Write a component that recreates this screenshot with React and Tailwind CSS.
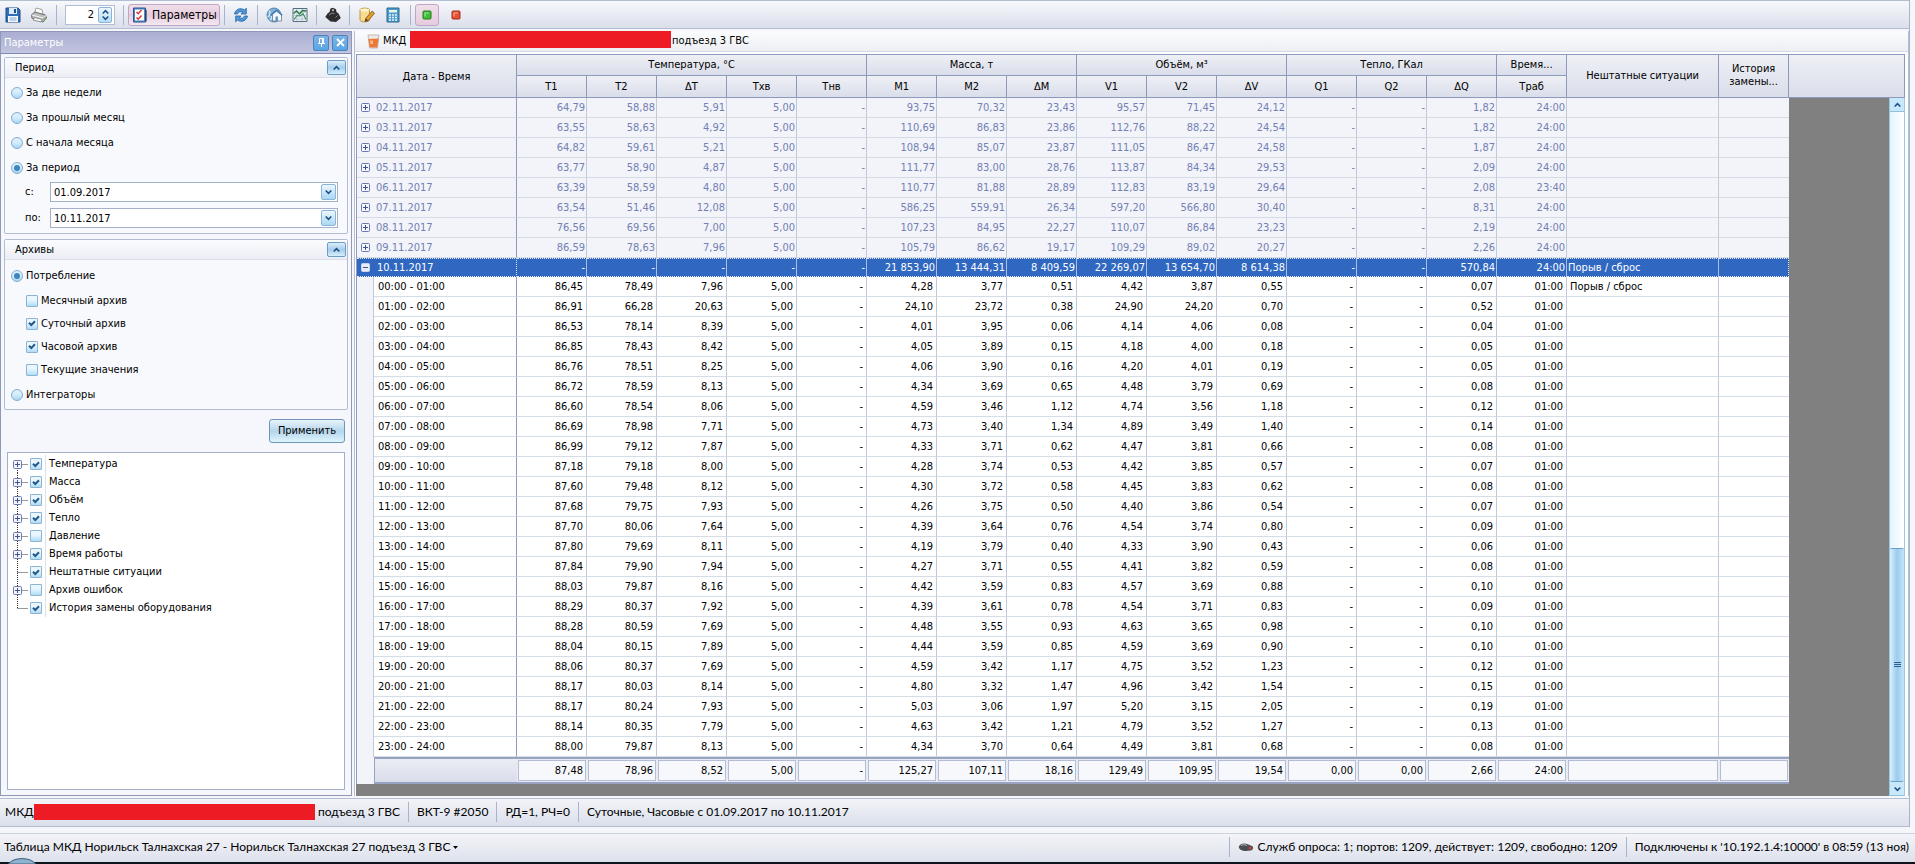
import { useState } from "react";

const DAYS = [
  ["02.11.2017", "64,79", "58,88", "5,91", "5,00", "-", "93,75", "70,32", "23,43", "95,57", "71,45", "24,12", "-", "-", "1,82", "24:00"],
  ["03.11.2017", "63,55", "58,63", "4,92", "5,00", "-", "110,69", "86,83", "23,86", "112,76", "88,22", "24,54", "-", "-", "1,82", "24:00"],
  ["04.11.2017", "64,82", "59,61", "5,21", "5,00", "-", "108,94", "85,07", "23,87", "111,05", "86,47", "24,58", "-", "-", "1,87", "24:00"],
  ["05.11.2017", "63,77", "58,90", "4,87", "5,00", "-", "111,77", "83,00", "28,76", "113,87", "84,34", "29,53", "-", "-", "2,09", "24:00"],
  ["06.11.2017", "63,39", "58,59", "4,80", "5,00", "-", "110,77", "81,88", "28,89", "112,83", "83,19", "29,64", "-", "-", "2,08", "23:40"],
  ["07.11.2017", "63,54", "51,46", "12,08", "5,00", "-", "586,25", "559,91", "26,34", "597,20", "566,80", "30,40", "-", "-", "8,31", "24:00"],
  ["08.11.2017", "76,56", "69,56", "7,00", "5,00", "-", "107,23", "84,95", "22,27", "110,07", "86,84", "23,23", "-", "-", "2,19", "24:00"],
  ["09.11.2017", "86,59", "78,63", "7,96", "5,00", "-", "105,79", "86,62", "19,17", "109,29", "89,02", "20,27", "-", "-", "2,26", "24:00"],
];

const SELECTED = ["-", "-", "-", "-", "-", "21 853,90", "13 444,31", "8 409,59", "22 269,07", "13 654,70", "8 614,38", "-", "-", "570,84", "24:00"];

// T1, T2, ΔT, M1, M2, ΔM, V1, V2, ΔV, ΔQ
const HOURS = [
  "86,45 78,49 7,96 4,28 3,77 0,51 4,42 3,87 0,55 0,07",
  "86,91 66,28 20,63 24,10 23,72 0,38 24,90 24,20 0,70 0,52",
  "86,53 78,14 8,39 4,01 3,95 0,06 4,14 4,06 0,08 0,04",
  "86,85 78,43 8,42 4,05 3,89 0,15 4,18 4,00 0,18 0,05",
  "86,76 78,51 8,25 4,06 3,90 0,16 4,20 4,01 0,19 0,05",
  "86,72 78,59 8,13 4,34 3,69 0,65 4,48 3,79 0,69 0,08",
  "86,60 78,54 8,06 4,59 3,46 1,12 4,74 3,56 1,18 0,12",
  "86,69 78,98 7,71 4,73 3,40 1,34 4,89 3,49 1,40 0,14",
  "86,99 79,12 7,87 4,33 3,71 0,62 4,47 3,81 0,66 0,08",
  "87,18 79,18 8,00 4,28 3,74 0,53 4,42 3,85 0,57 0,07",
  "87,60 79,48 8,12 4,30 3,72 0,58 4,45 3,83 0,62 0,08",
  "87,68 79,75 7,93 4,26 3,75 0,50 4,40 3,86 0,54 0,07",
  "87,70 80,06 7,64 4,39 3,64 0,76 4,54 3,74 0,80 0,09",
  "87,80 79,69 8,11 4,19 3,79 0,40 4,33 3,90 0,43 0,06",
  "87,84 79,90 7,94 4,27 3,71 0,55 4,41 3,82 0,59 0,08",
  "88,03 79,87 8,16 4,42 3,59 0,83 4,57 3,69 0,88 0,10",
  "88,29 80,37 7,92 4,39 3,61 0,78 4,54 3,71 0,83 0,09",
  "88,28 80,59 7,69 4,48 3,55 0,93 4,63 3,65 0,98 0,10",
  "88,04 80,15 7,89 4,44 3,59 0,85 4,59 3,69 0,90 0,10",
  "88,06 80,37 7,69 4,59 3,42 1,17 4,75 3,52 1,23 0,12",
  "88,17 80,03 8,14 4,80 3,32 1,47 4,96 3,42 1,54 0,15",
  "88,17 80,24 7,93 5,03 3,06 1,97 5,20 3,15 2,05 0,19",
  "88,14 80,35 7,79 4,63 3,42 1,21 4,79 3,52 1,27 0,13",
  "88,00 79,87 8,13 4,34 3,70 0,64 4,49 3,81 0,68 0,08",
];

const TOTALS = ["87,48", "78,96", "8,52", "5,00", "-", "125,27", "107,11", "18,16", "129,49", "109,95", "19,54", "0,00", "0,00", "2,66", "24:00", "", ""];

const COLUMNS = ["T1", "T2", "ΔT", "Тхв", "Тнв", "M1", "M2", "ΔM", "V1", "V2", "ΔV", "Q1", "Q2", "ΔQ", "Траб"];

const TREE = [
  { name: "Температура", checked: true, expandable: true },
  { name: "Масса", checked: true, expandable: true },
  { name: "Объём", checked: true, expandable: true },
  { name: "Тепло", checked: true, expandable: true },
  { name: "Давление", checked: false, expandable: true },
  { name: "Время работы", checked: true, expandable: true },
  { name: "Нештатные ситуации", checked: true, expandable: false },
  { name: "Архив ошибок", checked: false, expandable: true },
  { name: "История замены оборудования", checked: true, expandable: false },
];

const pad = (n) => String(n).padStart(2, "0");

const hourValues = (line) => {
  const v = line.split(" ");
  return [...v.slice(0, 3), "5,00", "-", ...v.slice(3, 9), "-", "-", v[9], "01:00"];
};

const Separator = () => <div className="h-5 w-px bg-[#a9b3cc]" />;

const Chevron = ({ up }) => (
  <svg width="7" height="6" viewBox="0 0 7 6" fill="none" stroke="#1d5183" strokeWidth="1.600">
    <path d={up ? "M0.7 4.5 3.5 1.7 6.3 4.5" : "M0.7 1.5 3.5 4.3 6.3 1.5"} />
  </svg>
);

const SaveIcon = () => (
  <svg width="16" height="16" viewBox="0 0 16 16">
    <path d="M1 1h12l2 2v12H1z" fill="#2f6fb8" stroke="#1b4b8a" />
    <path d="M4 1h8v6H4z" fill="#dfeaf7" />
    <path d="M9 2h2v4H9z" fill="#1f4f8c" />
    <path d="M3 9h10v6H3z" fill="#f4f8fd" />
    <path d="M4.500 11h7M4.500 13h7" stroke="#8aa8cc" />
  </svg>
);

const PrinterIcon = () => (
  <svg width="16" height="16" viewBox="0 0 16 16">
    <path d="M3.500 6.500 5 1l6 1.500 1 5z" fill="#fff" stroke="#8a8a8a" strokeWidth=".8" />
    <path d="M.8 7.500 4 5l10.500 3 1 3-3.500 4L.8 11z" fill="#bdbdbd" stroke="#5f5f5f" strokeWidth=".9" />
    <path d="m1 8 11 3 3-2.500" fill="none" stroke="#f6f6f6" />
    <path d="m3.500 10.500-1.500 2.500 8 2 1.500-2.500z" fill="#f7f7f7" stroke="#777" strokeWidth=".8" />
    <circle cx="13.300" cy="11.500" r=".9" fill="#6ab04a" />
  </svg>
);

const ParamsIcon = () => (
  <svg width="16" height="16" viewBox="0 0 16 16">
    <path d="M1.500 1h12v14h-12z" fill="#5487bd" stroke="#28578f" />
    <path d="M3 2.500h9v11H3z" fill="#fbfcff" />
    <path d="m4.500 5 1.700 1.700L9.500 3M4.500 10.500l1.700 1.700L9.500 8.500" fill="none" stroke="#d6392c" strokeWidth="1.500" />
    <path d="M14 3v11.500" stroke="#243a60" strokeWidth="1.200" />
  </svg>
);

const RefreshIcon = () => (
  <svg width="16" height="16" viewBox="0 0 16 16" fill="#4f97d8" stroke="#23639f" strokeWidth=".8">
    <path d="M1.500 7C2 3 7-.2 11.500 3l1.800-1.800V7H8l1.700-1.800C7.500 4 5.200 5 4.500 7z" />
    <path d="M14.500 9c-.5 4-5.500 7.200-10 4l-1.800 1.800V9H8l-1.700 1.800c2.200 1.200 4.500.2 5.200-1.800z" />
  </svg>
);

const HomeIcon = () => (
  <svg width="17" height="16" viewBox="0 0 17 16">
    <circle cx="8" cy="8" r="7" fill="#7fb3dd" stroke="#3c6f9f" strokeWidth=".8" />
    <path d="M1.500 10c3-1 3-5 1.500-6.500M4 13c2-1 2-3 1-4" fill="none" stroke="#d6ecfa" strokeWidth="1.200" />
    <path d="M5.500 8 10.500 4 15.500 8v6h-9V8z" fill="#f4f7fb" stroke="#6a7890" strokeWidth=".8" />
    <path d="m4.500 8.300 6-5 5.700 5" fill="none" stroke="#4d7fb0" strokeWidth="1.500" />
    <path d="M9.500 9.500H12V14H9.500z" fill="#5d95c8" />
  </svg>
);

const ChartIcon = () => (
  <svg width="16" height="16" viewBox="0 0 16 16">
    <path d="M1 1.500h14v13H1z" fill="#e6f0f4" stroke="#5a6c84" />
    <path d="M1 5h14M1 8.500h14M1 12h14M5 2v12M10 2v12" stroke="#a9bccb" strokeWidth=".7" />
    <path d="m1.500 6.500 3-2.500 3 3 3-3.500 4 .5" fill="none" stroke="#2d7a46" strokeWidth="1.400" />
    <path d="m2 12.500 3-4 3 .5 3-2.500 3 6" fill="none" stroke="#3e8a5a" strokeWidth="1.100" />
  </svg>
);

const WeightIcon = () => (
  <svg width="16" height="16" viewBox="0 0 16 16">
    <path d="M4.500 5 5.500 1.500 8 .8l3 1.400L11.500 5l2 1.500 2.300 4.500L11 15l-5.500-.5L.3 10 2.500 6.500z" fill="#2e2e2e" />
    <path d="m4 8 3-2 2.500.5" fill="none" stroke="#8c8c8c" />
    <path d="m10.500 10.500 2-2" stroke="#888" />
    <circle cx="8" cy="3.200" r="1.100" fill="#b5b5b5" />
  </svg>
);

const EditIcon = () => (
  <svg width="16" height="16" viewBox="0 0 16 16">
    <path d="M1 3c0-2.500 9.500-2.500 9.500 0v10c0 2.500-9.500 2.500-9.500 0z" fill="#f6dc8e" stroke="#b98a35" strokeWidth=".9" />
    <ellipse cx="5.700" cy="3" rx="4.500" ry="1.500" fill="#fff4cf" />
    <path d="m6 14.500 1-3.500 6.200-7 2.300 2.200-6 7.300z" fill="#e59b2c" stroke="#79501a" strokeWidth=".8" />
    <path d="m6 14.500.9-3 2.100 1.900z" fill="#4a3a2a" />
  </svg>
);

const CalculatorIcon = () => (
  <svg width="14" height="16" viewBox="0 0 14 16">
    <path d="M1 1h12v14H1z" fill="#4f9bcb" stroke="#2a6893" />
    <path d="M3 3h8v2.500H3z" fill="#e2f6e4" />
    <path d="M3 8h8M3 10.500h8M3 13h8" stroke="#e6f4fc" strokeWidth="1.300" strokeDasharray="2 1" />
  </svg>
);

const GlassIcon = () => (
  <svg width="13" height="15" viewBox="0 0 13 15">
    <path d="M1 1h11l-1.500 13h-8z" fill="#eee9e6" stroke="#b9a9a2" strokeWidth=".8" />
    <path d="m1.500 5 10-.5-1.200 9H2.700z" fill="#ec7a36" />
    <path d="M3 6.500h3V10H3.500z" fill="#f9b98c" />
  </svg>
);

const Lamp = ({ color, edge }) => (
  <svg width="10" height="10" viewBox="0 0 10 10">
    <rect x="1" y="1" width="8" height="8" rx="1" fill={color} stroke={edge} />
    <path d="M2.500 3h4.500M3 2.500v4" stroke="#fff" strokeOpacity=".5" strokeWidth="1.200" />
  </svg>
);

const PlugIcon = () => (
  <svg width="16" height="10" viewBox="0 0 16 10">
    <path d="M1 4c2-3 6-3 8-2l5 2c2 1 1 4-1 4.500L8 9C4 9 0 7 1 4z" fill="#4e4e52" />
    <path d="M3 3.500c2-1 4-1 6 0" stroke="#b5b5ba" fill="none" />
    <circle cx="12" cy="6" r="1.500" fill="#c9423a" />
  </svg>
);

const Expander = ({ open, light }) => (
  <svg width="9" height="9" viewBox="0 0 9 9" className="shrink-0">
    <rect x=".5" y=".5" width="8" height="8" rx="1" fill={light ? "#e6ecf7" : "#f3f5fc"} stroke={light ? "#c5d3ee" : "#6b79b0"} />
    <path d={open ? "M2 4.500h5" : "M2 4.500h5M4.500 2v5"} stroke="#45528c" />
  </svg>
);

const IconButton = ({ label, children }) => (
  <button type="button" aria-label={label} className="flex h-6 w-[26px] items-center justify-center">
    {children}
  </button>
);

const CheckBox = ({ id, defaultChecked }) => (
  <span className="grid shrink-0 place-items-center">
    <input
      id={id}
      type="checkbox"
      defaultChecked={defaultChecked}
      className="peer col-start-1 row-start-1 h-3 w-3 appearance-none rounded-[1px] border border-[#8db3d3] bg-linear-to-b from-[#e9f6fe] from-40% to-[#aedcf6]"
    />
    <svg width="8" height="7" viewBox="0 0 8 7" className="pointer-events-none invisible col-start-1 row-start-1 peer-checked:visible">
      <path d="M1 2.700 3.300 5 7 1.300" fill="none" stroke="#20598a" strokeWidth="2" />
    </svg>
  </span>
);

const Radio = ({ id, name, checked, onChange }) => (
  <span className="grid shrink-0 place-items-center">
    <input
      id={id}
      type="radio"
      name={name}
      checked={checked}
      onChange={onChange}
      className="peer col-start-1 row-start-1 h-3 w-3 appearance-none rounded-full border border-[#84abd0] bg-linear-to-b from-[#d9effc] from-40% to-[#a9d6f3]"
    />
    <span className="pointer-events-none invisible col-start-1 row-start-1 h-[6px] w-[6px] rounded-full bg-[#3f83bf] peer-checked:visible" />
  </span>
);

const Group = ({ title, children }) => (
  <section className="rounded-[2px] border border-[#b4bcd4] bg-[#f8f9fc]">
    <div className="flex h-5 items-center justify-between border-b border-[#dcdfe9] bg-linear-to-b from-[#fbfcfe] to-[#eceef5] pr-px pl-[10px]">
      <h2>{title}</h2>
      <button
        type="button"
        aria-label={`Свернуть: ${title}`}
        className="flex h-[15px] w-[19px] items-center justify-center rounded-[2px] border border-[#6c9dc6] bg-linear-to-b from-[#dceefb] via-[#a5cdea] to-[#d6effc]"
      >
        <Chevron up />
      </button>
    </div>
    {children}
  </section>
);

const DateField = ({ id, label, value }) => (
  <div className="flex h-5 items-center pr-[9px] pl-5">
    <label htmlFor={id} className="w-[25px]">
      {label}
    </label>
    <div className="flex h-5 flex-1 items-center border border-[#a5b1cb] bg-white pr-px">
      <input id={id} type="text" defaultValue={value} className="h-full min-w-0 flex-1 px-[3px] outline-none" />
      <button
        type="button"
        aria-label="Выбрать дату"
        className="flex h-4 w-[15px] items-center justify-center rounded-[2px] border border-[#8cb4d6] bg-linear-to-b from-[#ecf7fe] to-[#a9d8f5]"
      >
        <Chevron />
      </button>
    </div>
  </div>
);

const Toolbar = () => (
  <header className="flex h-[29px] items-center border-t border-b border-[#b4bed2] bg-linear-to-b from-[#f7f8fb] to-[#dadfeb]">
    <IconButton label="Сохранить"><SaveIcon /></IconButton>
    <IconButton label="Печать"><PrinterIcon /></IconButton>
    <div className="flex items-center gap-2 pl-1">
      <Separator />
      <div className="flex h-5 w-[50px] items-center border border-[#b4bdd2] bg-white">
        <input type="text" aria-label="Точность" defaultValue="2" className="h-full w-8 pr-1 text-right outline-none" />
        <div className="flex h-4 w-[14px] flex-col items-center justify-center rounded-[2px] border border-[#8cb4d6] bg-linear-to-b from-[#ecf7fe] to-[#b5ddf6]">
          <button type="button" aria-label="Больше"><Chevron up /></button>
          <button type="button" aria-label="Меньше"><Chevron /></button>
        </div>
      </div>
      <Separator />
    </div>
    <button
      type="button"
      className="mx-1 flex h-[22px] w-[92px] items-center gap-1 rounded-[3px] border border-[#c2a5c4] bg-linear-to-b from-[#efe0ea] via-[#e6cbdd] to-[#f3e9f1] pl-[3px] text-[12px]"
    >
      <ParamsIcon />
      Параметры
    </button>
    <Separator />
    <div className="px-[3px]"><IconButton label="Обновить"><RefreshIcon /></IconButton></div>
    <Separator />
    <div className="flex px-[3px]">
      <IconButton label="Объект"><HomeIcon /></IconButton>
      <IconButton label="График"><ChartIcon /></IconButton>
    </div>
    <Separator />
    <div className="px-[3px]"><IconButton label="Тепло"><WeightIcon /></IconButton></div>
    <Separator />
    <div className="flex px-1">
      <IconButton label="Правка"><EditIcon /></IconButton>
      <IconButton label="Калькулятор"><CalculatorIcon /></IconButton>
    </div>
    <Separator />
    <button
      type="button"
      aria-label="Норма"
      className="ml-1 flex h-[22px] w-6 items-center justify-center rounded-[3px] border border-[#c2a5c4] bg-linear-to-b from-[#efe0ea] to-[#e6cbdd]"
    >
      <Lamp color="#3fbf35" edge="#217a1d" />
    </button>
    <div className="pl-1"><IconButton label="Авария"><Lamp color="#e85032" edge="#a02a18" /></IconButton></div>
  </header>
);

const Sidebar = () => {
  const [period, setPeriod] = useState("range");
  const [archive, setArchive] = useState("consumption");

  const periods = [
    { id: "weeks", name: "За две недели" },
    { id: "lastMonth", name: "За прошлый месяц" },
    { id: "fromMonth", name: "С начала месяца" },
    { id: "range", name: "За период" },
  ];

  const archives = [
    { name: "Месячный архив", checked: false },
    { name: "Суточный архив", checked: true },
    { name: "Часовой архив", checked: true },
    { name: "Текущие значения", checked: false },
  ];

  return (
    <aside className="flex w-[352px] shrink-0 flex-col border border-[#8e99b8] bg-[#f6f7fc]">
      <div className="flex h-[22px] items-center border-b border-[#7f8bb5] bg-linear-to-b from-[#a9add0] to-[#c3c6e0] pr-[3px] pl-[3px]">
        <h1 className="flex-1 text-white">Параметры</h1>
        <div className="flex gap-[3px]">
          <button type="button" aria-label="Закрепить" className="flex h-4 w-4 items-center justify-center rounded-[2px] border border-[#4b84bd] bg-linear-to-b from-[#7db4e6] to-[#57a5e4]">
            <svg width="9" height="9" viewBox="0 0 9 9" fill="none" stroke="#fff">
              <path d="M2.500 5V.5h4V5M1 5.500h7M4.500 5.500V9M5.500 1v4" />
            </svg>
          </button>
          <button type="button" aria-label="Закрыть" className="flex h-4 w-4 items-center justify-center rounded-[2px] border border-[#4b84bd] bg-linear-to-b from-[#7db4e6] to-[#57a5e4]">
            <svg width="9" height="9" viewBox="0 0 9 9" stroke="#fff" strokeWidth="1.800">
              <path d="m1 1 7 7M8 1 1 8" />
            </svg>
          </button>
        </div>
      </div>

      <div className="flex flex-1 flex-col px-[3px] pt-[3px] pb-[5px]">
        <Group title="Период">
          <div className="pt-[2px] pb-[5px]">
            {periods.map((p) => (
              <div key={p.id} className="flex h-[25px] items-center gap-[3px] pl-[6px]">
                <Radio id={p.id} name="period" checked={period === p.id} onChange={() => setPeriod(p.id)} />
                <label htmlFor={p.id}>{p.name}</label>
              </div>
            ))}
            <div className="flex flex-col gap-[6px] pt-[2px]">
              <DateField id="dateFrom" label="с:" value="01.09.2017" />
              <DateField id="dateTo" label="по:" value="10.11.2017" />
            </div>
          </div>
        </Group>

        <div className="mt-[5px]">
          <Group title="Архивы">
            <div className="pt-[2px]">
              <div className="flex h-[27px] items-center gap-[3px] pl-[6px]">
                <Radio id="consumption" name="archive" checked={archive === "consumption"} onChange={() => setArchive("consumption")} />
                <label htmlFor="consumption">Потребление</label>
              </div>
              {archives.map((a, i) => (
                <div key={a.name} className="flex h-[23px] items-center gap-[3px] pl-[21px]">
                  <CheckBox id={`archive${i}`} defaultChecked={a.checked} />
                  <label htmlFor={`archive${i}`}>{a.name}</label>
                </div>
              ))}
              <div className="flex h-7 items-center gap-[3px] pl-[6px]">
                <Radio id="integrators" name="archive" checked={archive === "integrators"} onChange={() => setArchive("integrators")} />
                <label htmlFor="integrators">Интеграторы</label>
              </div>
            </div>
          </Group>
        </div>

        <div className="flex justify-end pt-[9px] pr-[3px] pb-[9px]">
          <button
            type="button"
            className="h-6 w-[76px] rounded-[3px] border border-[#6f94b8] bg-linear-to-b from-[#e9f4fb] via-[#b4d5ec] to-[#dff4fd]"
          >
            Применить
          </button>
        </div>

        <ul className="mx-[3px] flex-1 border border-[#a5afc8] bg-white py-[2px]">
          {TREE.map((item, i) => (
            <li key={item.name} className="flex h-[18px] items-center">
              <svg width="22" height="18" viewBox="0 0 22 18" fill="none" className="shrink-0">
                <path
                  d={`M9.500 ${i === 0 ? 9 : 0}V${i === TREE.length - 1 ? 9 : 18}M9.500 9.500H20`}
                  stroke="#333"
                  strokeDasharray="1 1"
                />
                {item.expandable && (
                  <>
                    <rect x="5.500" y="5.500" width="8" height="8" rx="1" fill="#f3f5fc" stroke="#6b79b0" />
                    <path d="M7 9.500h5M9.500 7v5" stroke="#45528c" />
                  </>
                )}
              </svg>
              <CheckBox id={`tree${i}`} defaultChecked={item.checked} />
              <label htmlFor={`tree${i}`} className="ml-[3px] border-l border-[#dde1ec] pl-[3px] leading-[18px]">
                {item.name}
              </label>
            </li>
          ))}
        </ul>
      </div>
    </aside>
  );
};

const HEAD = "border-r border-b border-[#8d9abb] bg-linear-to-b from-[#eef0f5] to-[#dadeea] px-0 font-normal";

const DataTable = () => (
  <table className="w-[1433px] shrink-0 table-fixed border-separate border-spacing-0 border-l border-[#8d9abb] leading-[13px]">
    <colgroup>
      <col className="w-[17px]" />
      <col className="w-[143px]" />
      {COLUMNS.map((c) => (
        <col key={c} className="w-[70px]" />
      ))}
      <col className="w-[152px]" />
      <col className="w-[70px]" />
    </colgroup>
    <thead>
      <tr className="h-[22px]">
        <th colSpan={2} rowSpan={2} className={`${HEAD} border-t py-0`}>Дата - Время</th>
        <th colSpan={5} className={`${HEAD} border-t pt-0 pb-[2px]`}>Температура, °C</th>
        <th colSpan={3} className={`${HEAD} border-t pt-0 pb-[2px]`}>Масса, т</th>
        <th colSpan={3} className={`${HEAD} border-t pt-0 pb-[2px]`}>Объём, м³</th>
        <th colSpan={3} className={`${HEAD} border-t pt-0 pb-[2px]`}>Тепло, ГКал</th>
        <th className={`${HEAD} border-t pt-0 pb-[2px]`}>Время...</th>
        <th rowSpan={2} className={`${HEAD} border-t pt-0 pb-[2px]`}>Нештатные ситуации</th>
        <th rowSpan={2} className={`${HEAD} border-t pt-0 pb-[2px]`}>История<br />замены...</th>
      </tr>
      <tr className="h-[22px]">
        {COLUMNS.map((c) => (
          <th key={c} className={`${HEAD} py-0`}>{c}</th>
        ))}
      </tr>
    </thead>
    <tbody>
      {DAYS.map(([date, ...values]) => (
        <tr key={date} className="h-5 bg-[#f2f4f9] text-[#7280b4]">
          <td colSpan={2} className="border-r border-b border-r-[#8d9abb] border-b-[#d5dbe6] p-0">
            <div className="flex items-center gap-[6px] pl-1">
              <Expander />
              {date}
            </div>
          </td>
          {values.map((v, i) => (
            <td key={i} className="border-r border-b border-r-[#c3c9d8] border-b-[#d5dbe6] p-0 pr-px text-right">{v}</td>
          ))}
          <td className="border-r border-b border-r-[#c3c9d8] border-b-[#d5dbe6] p-0" />
          <td className="border-b border-[#d5dbe6] p-0" />
        </tr>
      ))}
      <tr className="h-[19px] bg-[#2f67c1] text-white">
        <td colSpan={2} className="border-y border-r border-dotted border-[#dfe8f7] p-0">
          <div className="flex items-center gap-[7px] pl-1">
            <Expander open light />
            10.11.2017
          </div>
        </td>
        {SELECTED.map((v, i) => (
          <td key={i} className="border-y border-r border-y-[#dfe8f7] border-r-[#a8c0e8] [border-block-style:dotted] p-0 pr-px text-right">{v}</td>
        ))}
        <td className="border-y border-r border-y-[#dfe8f7] border-r-[#a8c0e8] [border-block-style:dotted] p-0 pl-px">Порыв / сброс</td>
        <td className="border-y border-r border-dotted border-[#dfe8f7] p-0" />
      </tr>
      {HOURS.map((line, h) => (
        <tr key={h} className="h-5 bg-white text-black">
          <td className="border-r border-[#c3c9d8] bg-[#f2f4f9] p-0" />
          <td className="border-r border-b border-r-[#8d9abb] border-b-[#d5dde6] p-0 pl-1">
            {pad(h)}:00 - {pad(h + 1)}:00
          </td>
          {hourValues(line).map((v, i) => (
            <td key={i} className="border-r border-b border-r-[#c3c9d8] border-b-[#d5dde6] p-0 pr-[3px] text-right">{v}</td>
          ))}
          <td className="border-r border-b border-r-[#c3c9d8] border-b-[#d5dde6] p-0 pl-[3px]">{h === 0 && "Порыв / сброс"}</td>
          <td className="border-b border-[#d5dde6] p-0" />
        </tr>
      ))}
    </tbody>
    <tfoot>
      <tr className="h-[27px]">
        <td className="bg-[#f2f4f9] p-0" />
        <td className="border-y-2 border-l border-[#98a3c2] bg-linear-to-b from-[#eceef4] to-[#d9dcea] p-0" />
        {TOTALS.map((v, i) => (
          <td key={i} className="border-y-2 border-[#98a3c2] bg-[#e9ebf3] px-px py-0">
            <div className="h-[21px] border border-[#b4bcd6] bg-[#f7f8fc] pr-[2px] text-right leading-[19px]">{v}</div>
          </td>
        ))}
      </tr>
    </tfoot>
  </table>
);

const ScrollBar = () => (
  <div className="flex w-4 flex-col border-x border-[#9cc7df] bg-linear-to-r from-[#e3f3fd] to-white">
    <button type="button" aria-label="Вверх" className="flex h-[14px] items-center justify-center border-b border-[#8fc0dc] bg-[#c8e9fb]">
      <Chevron up />
    </button>
    <div className="flex-[437]" />
    <div className="flex flex-[233] flex-col items-center justify-center gap-px rounded-[2px] border-y border-[#6a9fc4] bg-linear-to-r from-[#d9f0fd] via-[#9bcbed] to-[#c4e5fa]">
      <span className="h-px w-[7px] bg-[#2a628f]" />
      <span className="h-px w-[7px] bg-[#2a628f]" />
      <span className="h-px w-[7px] bg-[#2a628f]" />
    </div>
    <button type="button" aria-label="Вниз" className="flex h-[14px] items-center justify-center border-b border-[#8fc0dc] bg-[#c8e9fb]">
      <Chevron />
    </button>
  </div>
);

export default function App() {
  return (
    <div className="flex min-h-screen flex-col overflow-hidden bg-[#f4f6fa] font-['DejaVu_Sans_Condensed','DejaVu_Sans',sans-serif] text-[11px] leading-[14px] text-black">
      <div className="mr-[5px] flex flex-1 flex-col border-r border-[#a9b3cc]">
        <Toolbar />
        <div className="flex flex-1 pt-[2px]">
          <Sidebar />
          <main className="ml-[2px] flex min-w-0 flex-1 flex-col border-x border-[#b4bdd4] bg-white">
            <div className="flex h-[21px] items-center border-b border-[#d5d9e5] bg-linear-to-b from-[#fbfcfd] to-[#eeeff4] pl-3">
              <GlassIcon />
              <span className="w-[30px] pl-[3px]">МКД</span>
              <span className="h-[17px] w-[261px] self-start bg-[#ed1c24]" />
              <span className="pl-px">подъезд 3 ГВС</span>
            </div>
            <div className="mt-[2px] mr-[3px] ml-px flex flex-1">
              <div className="flex shrink-0 flex-col bg-[#808080]">
                <DataTable />
              </div>
              <div className="flex min-w-0 flex-1 flex-col">
                <div className="h-11 border-t border-r border-b border-[#8d9abb] bg-linear-to-b from-[#eef0f5] to-[#dadeea]" />
                <div className="flex flex-1 justify-end bg-[#808080]">
                  <ScrollBar />
                </div>
              </div>
            </div>
          </main>
        </div>
        <div className="mt-[2px] flex h-[29px] items-center gap-2 border-t border-b border-[#b4bed2] bg-linear-to-b from-[#f3f4f8] to-[#dadfeb] pb-[2px] pl-[5px] font-[Lato,'Noto_Sans',sans-serif] text-[12px]">
          <div className="flex items-center">
            <span className="w-[29px]">МКД</span>
            <span className="h-4 w-[281px] bg-[#ed1c24]" />
            <span className="pl-[3px]">подъезд 3 ГВС</span>
          </div>
          <Separator />
          <span>ВКТ-9 #2050</span>
          <Separator />
          <span>РД=1, РЧ=0</span>
          <Separator />
          <span>Суточные, Часовые с 01.09.2017 по 10.11.2017</span>
        </div>
      </div>

      <footer className="relative mt-[6px] flex h-[31px] items-center border-t border-b-2 border-t-[#ccd3e0] border-b-[#0d141c] bg-linear-to-b from-[#f3f4f8] to-[#dde1ec] pr-[6px] pb-[2px] pl-1 font-[Lato,'Noto_Sans',sans-serif] text-[12px]">
        <button type="button" className="flex items-center gap-[3px]">
          Таблица МКД Норильск Талнахская 27 - Норильск Талнахская 27 подъезд 3 ГВС
          <svg width="5" height="3" viewBox="0 0 5 3">
            <path d="M0 0h5L2.500 3z" />
          </svg>
        </button>
        <div className="ml-auto flex items-center gap-2">
          <Separator />
          <div className="flex items-center gap-1">
            <PlugIcon />
            <span>Служб опроса: 1; портов: 1209, действует: 1209, свободно: 1209</span>
          </div>
          <Separator />
          <span>Подключены к '10.192.1.4:10000' в 08:59 (13 ноя)</span>
        </div>
        <svg width="28" height="6" viewBox="0 0 28 6" className="absolute -bottom-[2px] left-2">
          <path d="M.5 6C5-1.200 23-1.200 27.500 6z" fill="#8fb3cf" stroke="#3c6484" />
        </svg>
      </footer>
    </div>
  );
}
